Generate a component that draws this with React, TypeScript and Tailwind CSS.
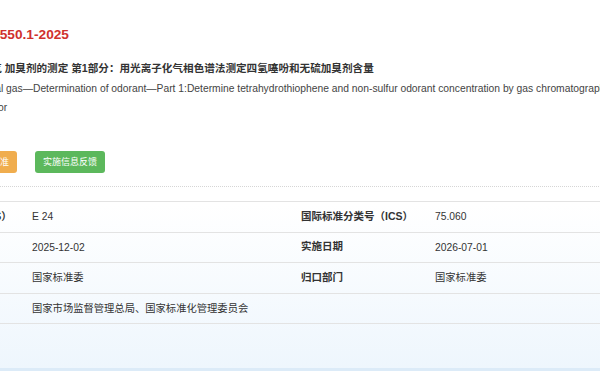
const rows = [
  ["中国标准分类号（CCS）", "E 24", "国际标准分类号（ICS）", "75.060"],
  ["发布日期", "2025-12-02", "实施日期", "2026-07-01"],
  ["主管部门", "国家标准委", "归口部门", "国家标准委"],
  ["发布单位", "国家市场监督管理总局、国家标准化管理委员会", "", ""],
];

export default function App() {
  return (
    <div className="relative h-[371px] w-[600px] overflow-hidden bg-gradient-to-b from-white from-55% to-[#eef6fd] font-['Liberation_Sans','Noto_Sans_CJK_SC',sans-serif] text-[#333]">
      <div className="-ml-[113px] w-[1000px]">
        {/* header */}
        <div className="pl-[83px] pt-[25px]">
          <h1 className="-ml-[22px] h-[20px] text-[13.7px] font-bold leading-[20px] text-[#d0312d]">
            GB/T 45550.1-2025
          </h1>
          <h2 className="mt-[14px] h-[19px] text-[10.6px] font-bold leading-[19px] text-[#333]">
            天然气 加臭剂的测定 第1部分：用光离子化气相色谱法测定四氢噻吩和无硫加臭剂含量
          </h2>
          <p className="mt-[1px] w-[760px] text-[10.3px] leading-[19px] text-[#444]">
            Natural gas—Determination of odorant—Part 1:Determine tetrahydrothiophene and non-sulfur odorant concentration by gas chromatography with photoionization detector
          </p>
          <div className="-ml-[5px] mt-[34px] flex gap-[18px]">
            <button className="h-[22px] rounded-[3px] bg-[#f0ad4e] px-[8px] text-[9px] leading-[22px] text-white">
              下载标准
            </button>
            <button className="h-[22px] rounded-[3px] bg-[#5cb85c] px-[8px] text-[9px] leading-[22px] text-white">
              实施信息反馈
            </button>
          </div>
        </div>
        <div className="mt-[13px] border-t border-dotted border-[#d6d6d6]" />

        {/* info table */}
        <div className="mt-[14px] grid grid-cols-[137px_269px_134px_1fr] border-t border-[#e3e3e3] text-[10.3px]">
          {rows.map((r, i) => (
            <div key={i} className="col-span-4 grid h-[30.5px] grid-cols-subgrid items-center border-b border-[#e3e3e3]">
              <div className="px-[8px] text-[10.5px] font-bold">{r[0]}</div>
              <div className="px-[8px]">{r[1]}</div>
              <div className="px-[8px] text-[10.5px] font-bold">{r[2]}</div>
              <div className="px-[8px]">{r[3]}</div>
            </div>
          ))}
        </div>
      </div>
      <div className="absolute bottom-0 left-0 h-[3px] w-full bg-[#dcebf8]" />
    </div>
  );
}
